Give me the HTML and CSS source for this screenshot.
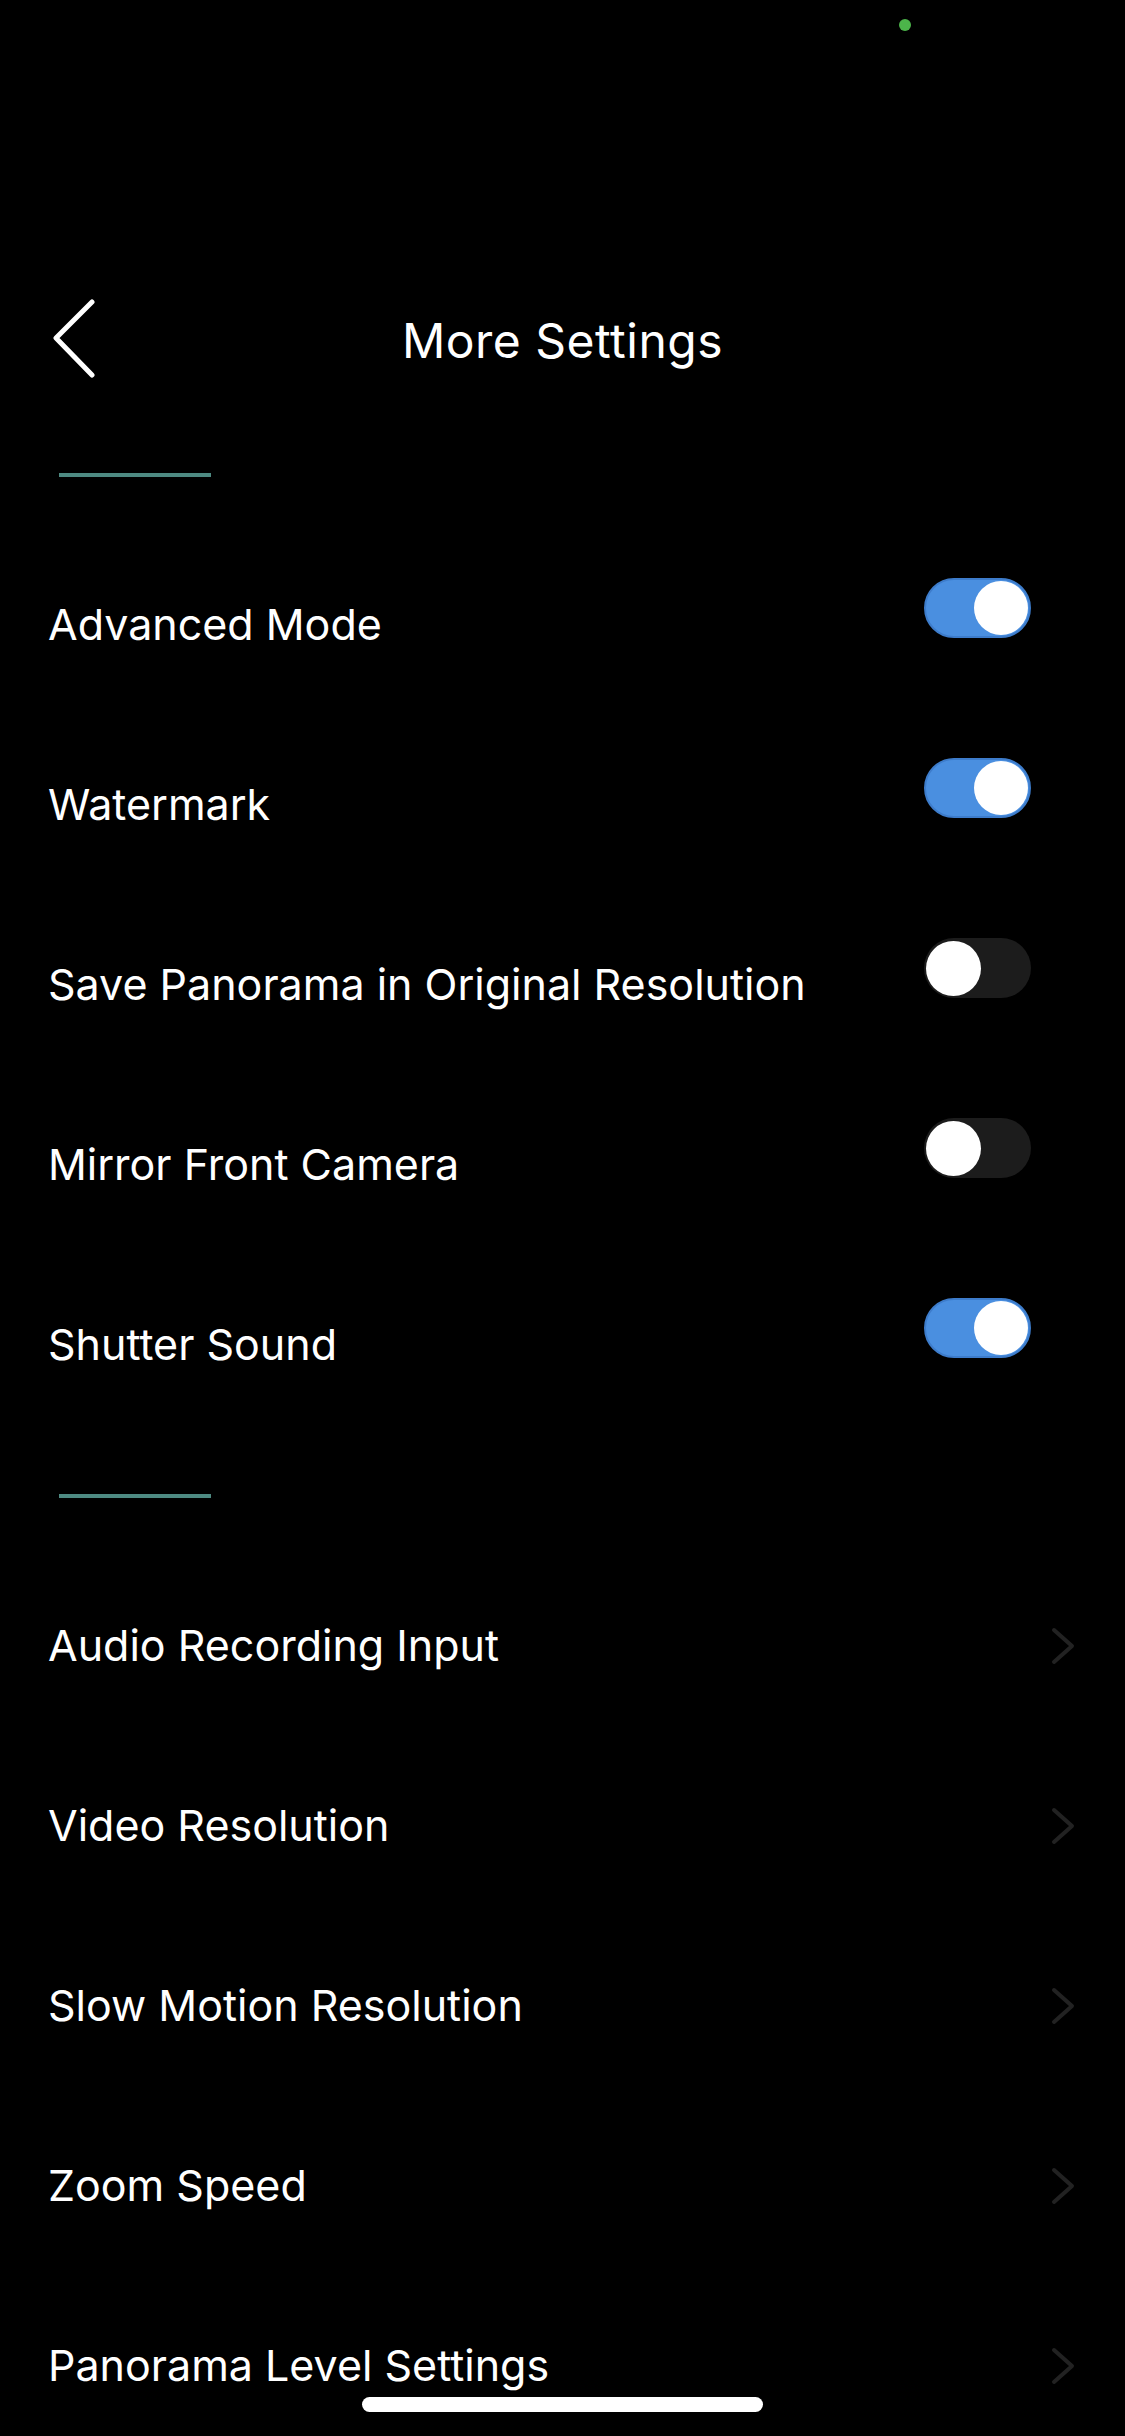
FILE: index.html
```html
<!DOCTYPE html>
<html lang="en">

<head>
    <meta charset="UTF-8" />
    <meta name="viewport" content="width=device-width, initial-scale=1.0" />
    <title>More Settings</title>

    <link rel="stylesheet" href="styles.css">

</head>

<body>
    <div class="screen">
        <div class="status-bar">
            <span class="cam-dot"></span>
        </div>

        <header class="nav-header">
            <a class="back-btn" href="#">
                <svg width="70" height="80" viewBox="0 0 70 80">
                    <polyline points="52,4 16,40 52,77" fill="none" stroke="#fff" stroke-width="5"
                        stroke-linecap="round" stroke-linejoin="round" />
                </svg>
            </a>
            <h1 class="title">More Settings</h1>
            <span></span>
        </header>

        <!-- toggles -->
        <section class="group">
            <div class="group-mark"></div>
            <div class="row">
                <span class="row-label">Advanced Mode</span>
                <span class="switch on"><span class="knob"></span></span>
            </div>
            <div class="row">
                <span class="row-label">Watermark</span>
                <span class="switch on"><span class="knob"></span></span>
            </div>
            <div class="row">
                <span class="row-label">Save Panorama in Original Resolution</span>
                <span class="switch"><span class="knob"></span></span>
            </div>
            <div class="row">
                <span class="row-label">Mirror Front Camera</span>
                <span class="switch"><span class="knob"></span></span>
            </div>
            <div class="row">
                <span class="row-label">Shutter Sound</span>
                <span class="switch on"><span class="knob"></span></span>
            </div>
        </section>

        <!-- sub pages -->
        <section class="group">
            <div class="group-mark"></div>
            <a class="row link" href="#">
                <span class="row-label">Audio Recording Input</span>
                <svg class="chev" width="30" height="40" viewBox="0 0 30 40">
                    <polyline points="6,4 24,20 6,36" />
                </svg>
            </a>
            <a class="row link" href="#">
                <span class="row-label">Video Resolution</span>
                <svg class="chev" width="30" height="40" viewBox="0 0 30 40">
                    <polyline points="6,4 24,20 6,36" />
                </svg>
            </a>
            <a class="row link" href="#">
                <span class="row-label">Slow Motion Resolution</span>
                <svg class="chev" width="30" height="40" viewBox="0 0 30 40">
                    <polyline points="6,4 24,20 6,36" />
                </svg>
            </a>
            <a class="row link" href="#">
                <span class="row-label">Zoom Speed</span>
                <svg class="chev" width="30" height="40" viewBox="0 0 30 40">
                    <polyline points="6,4 24,20 6,36" />
                </svg>
            </a>
            <a class="row link" href="#">
                <span class="row-label">Panorama Level Settings</span>
                <svg class="chev" width="30" height="40" viewBox="0 0 30 40">
                    <polyline points="6,4 24,20 6,36" />
                </svg>
            </a>
        </section>

        <div class="home-indicator"></div>
    </div>
</body>

</html>
```

FILE: styles.css
```css
html,
body {
    margin: 0;
    padding: 0;
    background: #000;
}

body {
    font-family: Inter, "Noto Sans", sans-serif;
    color: #fff;
}

.screen {
    position: relative;
    width: 1125px;
    height: 2436px;
    overflow: hidden;
    background: #000;
}

.status-bar {
    height: 280px;
    display: flex;
    align-items: flex-start;
    padding-left: 899px;
    box-sizing: border-box;
}

.cam-dot {
    width: 12px;
    height: 12px;
    margin-top: 19px;
    border-radius: 50%;
    background: #4cb54a;
}

.nav-header {
    height: 120px;
    display: grid;
    grid-template-columns: 1fr auto 1fr;
    align-items: center;
    padding: 0 40px;
}

.back-btn {
    display: flex;
    align-items: center;
}

.back-btn svg {
    margin-top: -4px;
}

.title {
    margin: 0;
    font-size: 48px;
    font-weight: 400;
    letter-spacing: 0.5px;
}

.group {
    margin-top: 73px;
}

.group + .group {
    margin-top: 59px;
}

.group-mark {
    width: 152px;
    height: 4px;
    margin-left: 59px;
    margin-bottom: 58px;
    background: #4e8a82;
}

.row {
    height: 180px;
    display: flex;
    align-items: center;
    justify-content: space-between;
    padding: 0 94px 0 48px;
    color: #fff;
    text-decoration: none;
}

.row-label {
    font-size: 43px;
    letter-spacing: 0;
    margin-top: -2px;
}

.switch {
    position: relative;
    width: 107px;
    height: 60px;
    margin-bottom: 34px;
    border-radius: 30px;
    background: #1c1c1c;
    box-sizing: border-box;
}

.switch.on {
    background: #4a8fe0;
    border: 2px solid #3d7ccb;
}

.knob {
    position: absolute;
    top: 3px;
    left: 2px;
    width: 55px;
    height: 55px;
    border-radius: 50%;
    background: #fff;
}

.switch.on .knob {
    top: 1px;
    left: auto;
    right: 1px;
    width: 54px;
    height: 54px;
}

.row.link {
    padding-right: 47px;
}

.chev polyline {
    fill: none;
    stroke: #222;
    stroke-width: 4;
    stroke-linecap: round;
    stroke-linejoin: round;
}

.home-indicator {
    position: absolute;
    left: 362px;
    bottom: 24px;
    width: 401px;
    height: 15px;
    border-radius: 8px;
    background: #fff;
}
```
